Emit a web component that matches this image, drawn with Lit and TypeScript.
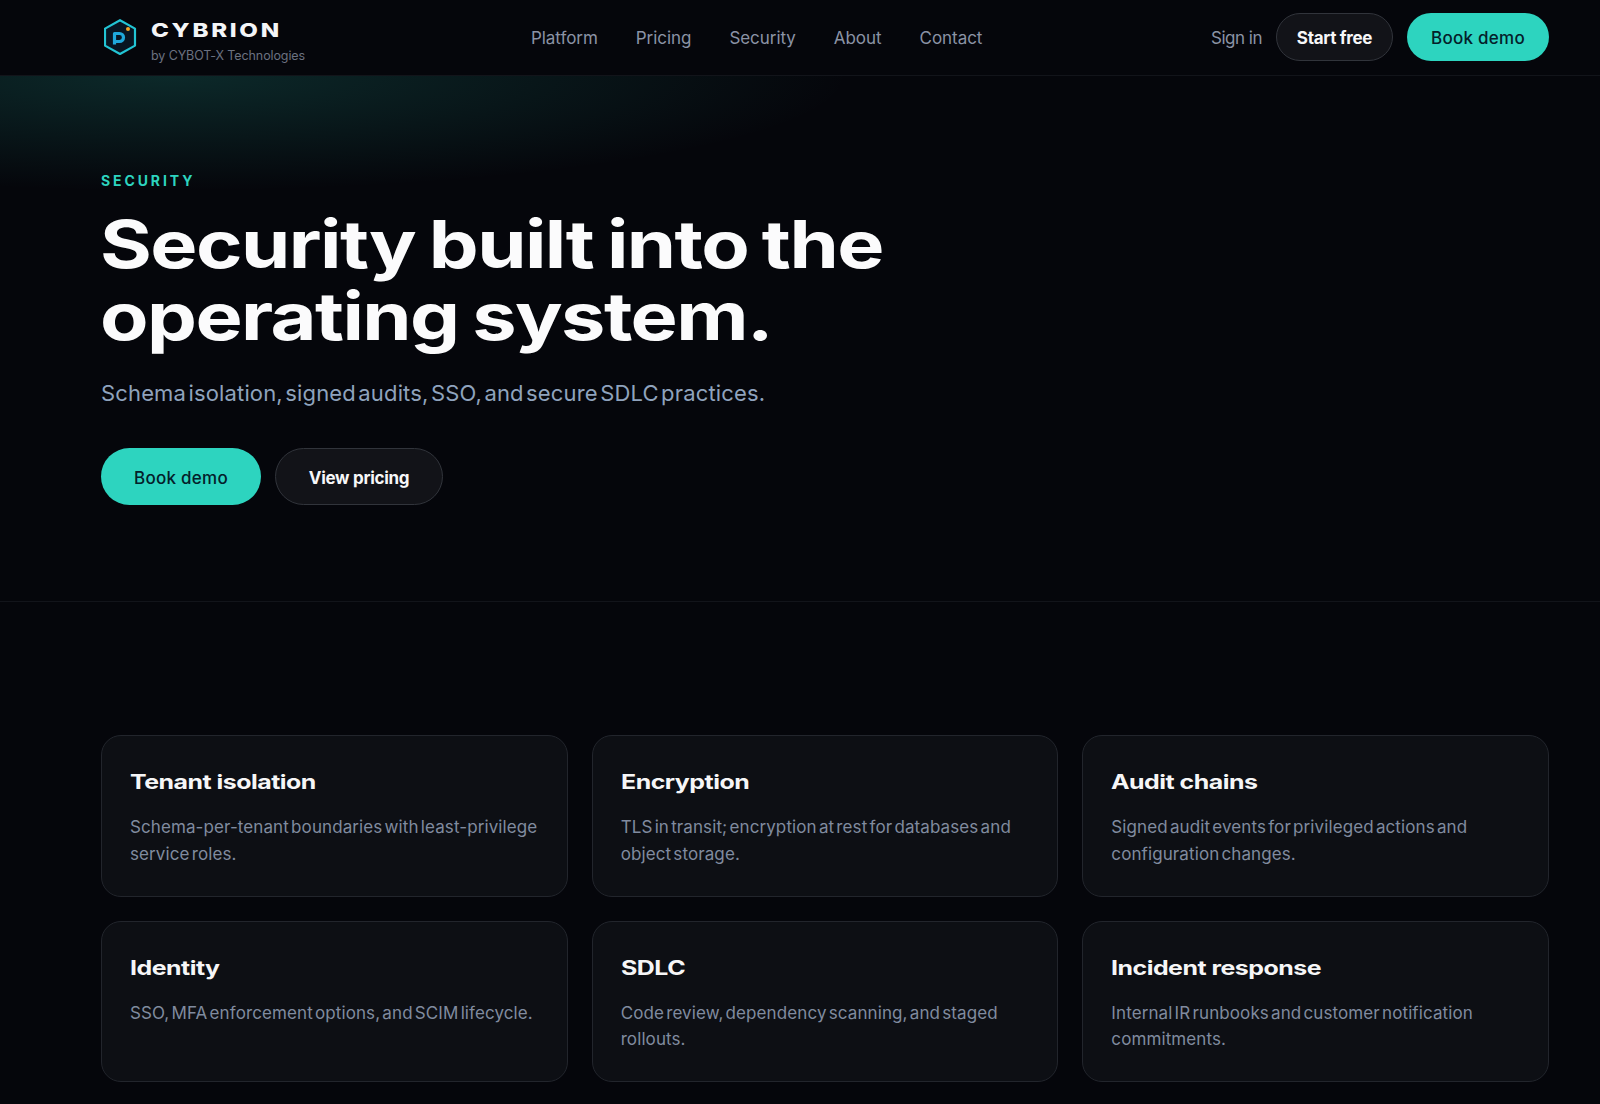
import { LitElement, html, css } from "lit";
import { customElement } from "lit/decorators.js";

const cards = [
  ["Tenant isolation", "Schema-per-tenant boundaries with least-privilege service roles."],
  ["Encryption", "TLS in transit; encryption at rest for databases and object storage."],
  ["Audit chains", "Signed audit events for privileged actions and configuration changes."],
  ["Identity", "SSO, MFA enforcement options, and SCIM lifecycle."],
  ["SDLC", "Code review, dependency scanning, and staged rollouts."],
  ["Incident response", "Internal IR runbooks and customer notification commitments."],
];

@customElement("app-root")
export class AppRoot extends LitElement {
  static styles = css`
    :host { display: block; height: 1104px; overflow: hidden; background: #05060b; color: #fff; font-family: "Inter", "Open Sans", sans-serif; }
    * { box-sizing: border-box; }
    header { height: 76px; display: flex; align-items: center; padding: 0 51px 0 104px; border-bottom: 1px solid #12141a; background: #05060b; }
    .brand { width: 427px; display: flex; align-items: center; gap: 13px; }
    .brand-text { display: flex; flex-direction: column; gap: 6px; padding-top: 8px; }
    .wordmark { font-size: 19px; line-height: 22px; font-weight: 800; letter-spacing: 2.1px; color: #f4f5f7; transform: scaleX(1.27); transform-origin: left; white-space: nowrap; }
    .by { font-size: 12.5px; line-height: 15px; color: #6b7180; letter-spacing: -0.1px; }
    nav { display: flex; gap: 38px; flex: 1; padding-top: 1px; }
    nav span { font-size: 17px; letter-spacing: -0.05px; color: #8b93a5; }
    .actions { display: flex; align-items: center; gap: 14px; padding-bottom: 2px; }
    .signin { font-size: 17px; letter-spacing: -0.5px; color: #8b93a5; margin-top: 2px; }
    .btn { display: flex; align-items: center; justify-content: center; border-radius: 999px; font-size: 17px; letter-spacing: -0.3px; padding-top: 3px; }
    .primary { background: #2dd4bf; color: #04202a; font-weight: 500; letter-spacing: 0.25px; }
    .ghost { background: #121318; border: 1px solid #31343b; color: #f7f7f8; font-weight: 700; }
    .actions .ghost { width: 117px; height: 48px; }
    .actions .primary { width: 142px; height: 48px; }
    .hero { height: 526px; padding: 96px 0 0 101px; border-bottom: 1px solid #12141a;
      background: radial-gradient(ellipse 680px 115px at 170px 0, rgba(45,212,191,0.17), rgba(45,212,191,0) 100%); }
    .eyebrow { font-size: 14px; line-height: 18px; font-weight: 700; letter-spacing: 2.9px; color: #2dd4bf; }
    h1 { margin: 18px 0 0 -1px; font-size: 66px; line-height: 72px; font-weight: 700; letter-spacing: -1.3px; word-spacing: -3px; color: #fbfbfc; transform: scaleX(1.2); transform-origin: left; white-space: nowrap; }
    .sub { margin: 25px 0 0; font-size: 22px; line-height: 32px; letter-spacing: 0.15px; word-spacing: -3.9px; color: #8fa3bd; }
    .cta { display: flex; gap: 14px; margin-top: 39px; }
    .cta .primary { width: 160px; height: 57px; }
    .cta .ghost { width: 168px; height: 57px; }
    .grid { display: grid; grid-template-columns: repeat(3, 1fr); gap: 24px; margin: 133px 51px 0 101px; }
    .card { height: 161.5px; padding: 31px 28px; background: #0d0f14; border: 1px solid #22252c; border-radius: 20px; }
    h3 { margin: 0; font-size: 20px; line-height: 30px; font-weight: 700; letter-spacing: -0.4px; color: #f6f6f7; transform: scaleX(1.245); transform-origin: left; white-space: nowrap; }
    .card p { margin: 17px 0 0; font-size: 17px; line-height: 26.7px; letter-spacing: 0.1px; word-spacing: -2.7px; color: #808b9f; }
  `;

  render() {
    return html`
      <header>
        <div class="brand">
          <svg width="34" height="38" viewBox="0 0 34 38" fill="none">
            <path d="M16 1.2 L31 9.6 V26.6 L16 35 L1 26.6 V9.6 Z" stroke="#22c4d4" stroke-width="2.2" fill="#081522" stroke-linejoin="round"/>
            <path d="M10.5 25.5 V14.5 H15.5 a4 4 0 0 1 0 8 H10.5" stroke="#1fa8dc" stroke-width="3.2" stroke-linejoin="round" fill="none"/>
            <circle cx="24" cy="10" r="2" fill="#f5a524"/>
          </svg>
          <div class="brand-text">
            <div class="wordmark">CYBRION</div>
            <div class="by">by CYBOT-X Technologies</div>
          </div>
        </div>
        <nav><span>Platform</span><span>Pricing</span><span>Security</span><span>About</span><span>Contact</span></nav>
        <div class="actions">
          <span class="signin">Sign in</span>
          <div class="btn ghost">Start free</div>
          <div class="btn primary">Book demo</div>
        </div>
      </header>
      <section class="hero">
        <div class="eyebrow">SECURITY</div>
        <h1>Security built into the<br />operating system.</h1>
        <p class="sub">Schema isolation, signed audits, SSO, and secure SDLC practices.</p>
        <div class="cta">
          <div class="btn primary">Book demo</div>
          <div class="btn ghost">View pricing</div>
        </div>
      </section>
      <section class="grid">
        ${cards.map(([t, d]) => html`<div class="card"><h3>${t}</h3><p>${d}</p></div>`)}
      </section>
    `;
  }
}
